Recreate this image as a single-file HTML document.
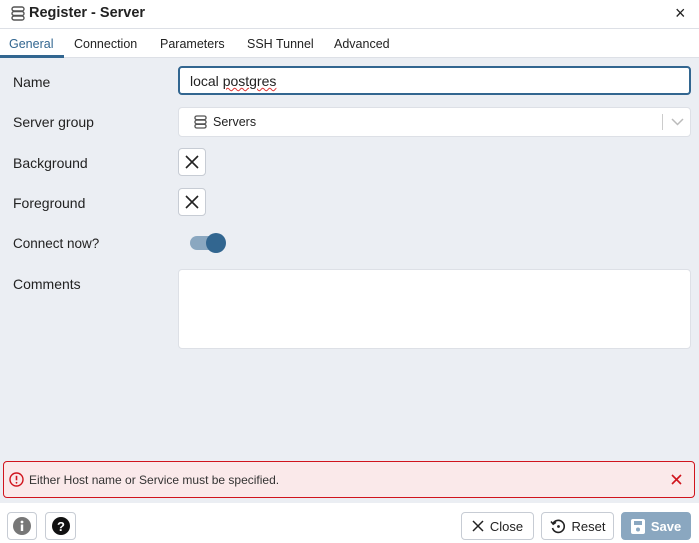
<!DOCTYPE html>
<html><head><style>
*{box-sizing:border-box;margin:0;padding:0}
body{width:699px;height:543px;background:#ebeef3;font-family:"Liberation Sans",sans-serif;font-size:13.5px;color:#222;position:relative;overflow:hidden}
.a{position:absolute}
.hdr{left:0;top:0;width:699px;height:29px;background:#fff;border-bottom:1px solid #dde0e6}
.tabs{left:0;top:29px;width:699px;height:29px;background:#fff;border-bottom:1px solid #dde0e6}
.tab{position:absolute;top:8px;font-size:12.5px;color:#222}
.lbl{left:13px;font-size:14px;color:#222}
.box{background:#fff;border:1px solid #dde0e6;border-radius:4px}
.btn{background:#fff;border:1px solid #c7ccd4;border-radius:4px;display:flex;align-items:center;justify-content:center;font-size:13px;color:#222;gap:6px}
</style></head><body>
<div class="a hdr">
 <svg class="a" style="left:11px;top:6px" width="14" height="15" viewBox="0 0 14 15"><g fill="none" stroke="#555" stroke-width="1.4"><rect x="1" y="1" width="12" height="4" rx="2"/><rect x="1" y="5.5" width="12" height="4" rx="2"/><rect x="1" y="10" width="12" height="4" rx="2"/></g></svg>
 <div class="a" style="left:29px;top:5px;font-size:14.5px;font-weight:bold;color:#222">Register - Server</div>
 <div class="a" style="left:675px;top:3px;font-size:18px;color:#222">×</div>
</div>
<div class="a tabs">
 <div class="tab" style="left:9px;color:#326690">General</div>
 <div class="a" style="left:0;top:26px;width:64px;height:3px;background:#326690"></div>
 <div class="tab" style="left:74px">Connection</div>
 <div class="tab" style="left:160px">Parameters</div>
 <div class="tab" style="left:247px">SSH Tunnel</div>
 <div class="tab" style="left:334px">Advanced</div>
</div>
<div class="a lbl" style="top:74px">Name</div>
<div class="a box" style="left:178px;top:66px;width:513px;height:29px;border:2px solid #326690;padding:5px 10px;font-size:14px">local <span style="text-decoration:underline wavy #d33;text-decoration-thickness:1px">postgres</span></div>
<div class="a lbl" style="top:114px">Server group</div>
<div class="a box" style="left:178px;top:107px;width:513px;height:30px"></div>
<svg class="a" style="left:194px;top:115px" width="13" height="14" viewBox="0 0 14 15"><g fill="none" stroke="#555" stroke-width="1.4"><rect x="1" y="1" width="12" height="4" rx="2"/><rect x="1" y="5.5" width="12" height="4" rx="2"/><rect x="1" y="10" width="12" height="4" rx="2"/></g></svg>
<div class="a" style="left:213px;top:115px;font-size:12.5px">Servers</div>
<div class="a" style="left:662px;top:114px;width:1px;height:16px;background:#ccc"></div>
<svg class="a" style="left:671px;top:118px" width="13" height="8" viewBox="0 0 13 8"><path d="M1 1l5.5 5.5L12 1" fill="none" stroke="#bbb" stroke-width="1.5"/></svg>
<div class="a lbl" style="top:155px">Background</div>
<div class="a box" style="left:178px;top:148px;width:28px;height:28px;border-color:#c7ccd4"></div>
<svg class="a" style="left:185px;top:155px" width="14" height="14"><path d="M1 1l12 12M13 1L1 13" stroke="#222" stroke-width="1.6"/></svg>
<div class="a lbl" style="top:195px">Foreground</div>
<div class="a box" style="left:178px;top:188px;width:28px;height:28px;border-color:#c7ccd4"></div>
<svg class="a" style="left:185px;top:195px" width="14" height="14"><path d="M1 1l12 12M13 1L1 13" stroke="#222" stroke-width="1.6"/></svg>
<div class="a lbl" style="top:236px;font-size:13.5px">Connect now?</div>
<div class="a" style="left:190px;top:236px;width:32px;height:14px;border-radius:7px;background:#8aa7c0"></div>
<div class="a" style="left:206px;top:233px;width:20px;height:20px;border-radius:50%;background:#326690"></div>
<div class="a lbl" style="top:276px">Comments</div>
<div class="a box" style="left:178px;top:269px;width:513px;height:80px"></div>
<div class="a" style="left:3px;top:461px;width:692px;height:37px;background:#fae9ea;border:1px solid #d0141d;border-radius:4px"></div>
<svg class="a" style="left:9px;top:472px" width="15" height="15" viewBox="0 0 15 15"><circle cx="7.5" cy="7.5" r="6.5" fill="none" stroke="#d0141d" stroke-width="1.4"/><path d="M7.5 3.8v4.5" stroke="#d0141d" stroke-width="1.6"/><circle cx="7.5" cy="10.8" r=".9" fill="#d0141d"/></svg>
<div class="a" style="left:29px;top:473px;font-size:12px;color:#333">Either Host name or Service must be specified.</div>
<svg class="a" style="left:671px;top:474px" width="11" height="11"><path d="M1 1l9 9M10 1L1 10" stroke="#d0141d" stroke-width="1.6"/></svg>
<div class="a" style="left:0;top:503px;width:699px;height:40px;background:#fff"></div>
<div class="a btn" style="left:7px;top:512px;width:30px;height:28px"><svg width="18" height="18"><circle cx="9" cy="9" r="9" fill="#777"/><rect x="7.8" y="7.5" width="2.4" height="6.5" fill="#fff"/><circle cx="9" cy="5" r="1.4" fill="#fff"/></svg></div>
<div class="a btn" style="left:45px;top:512px;width:31px;height:28px"><svg width="18" height="18"><circle cx="9" cy="9" r="9" fill="#111"/><text x="9" y="14" text-anchor="middle" font-family="Liberation Sans" font-weight="bold" font-size="13" fill="#fff">?</text></svg></div>
<div class="a btn" style="left:461px;top:512px;width:73px;height:28px"><svg width="12" height="12"><path d="M1 1l10 10M11 1L1 11" stroke="#222" stroke-width="1.5"/></svg>Close</div>
<div class="a btn" style="left:541px;top:512px;width:73px;height:28px"><svg width="16" height="16" viewBox="0 0 16 16"><path d="M3 5.5A6 6 0 1 1 2.5 10" fill="none" stroke="#222" stroke-width="1.6"/><path d="M1 3.5l2.2 2.7 2.8-1.8" fill="none" stroke="#222" stroke-width="1.5"/><circle cx="8.5" cy="8.5" r="1.4" fill="#222"/></svg>Reset</div>
<div class="a btn" style="left:621px;top:512px;width:70px;height:28px;background:#8aa7c0;border-color:#8aa7c0;color:#fff;font-weight:bold"><svg width="14" height="15" viewBox="0 0 14 15"><rect x="0" y="0" width="14" height="15" rx="2" fill="#fff"/><rect x="3" y="2" width="8" height="4" fill="#8aa7c0"/><circle cx="7" cy="10.5" r="2" fill="#8aa7c0"/></svg>Save</div>
</body></html>
